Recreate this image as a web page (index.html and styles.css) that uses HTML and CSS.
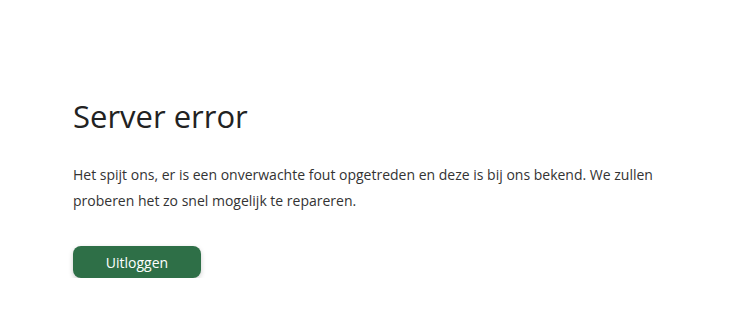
FILE: index.html
```html
<!DOCTYPE html>
<html lang="nl">
<head>
    <meta charset="UTF-8">
    <meta name="viewport" content="width=device-width, initial-scale=1.0">
    <title>Server error</title>
    <link rel="stylesheet" href="styles.css">
</head>
<body>
    <!-- ERROR PAGE -->
    <div class="error-page">
        <h1 class="error-title">Server error</h1>
        <p class="error-text">Het spijt ons, er is een onverwachte fout opgetreden en deze is bij ons bekend. We zullen proberen het zo snel mogelijk te repareren.</p>
        <button class="logout-button">Uitloggen</button>
    </div>
</body>
</html>
```

FILE: styles.css
```css
/* General Styles */
body {
    margin: 0;
    background: #ffffff;
    font-family: 'Open Sans', 'Noto Sans', sans-serif;
    color: #333333;
}

.error-page {
    padding: 96px 73px 0 73px;
    max-width: 600px;
}

/* Header */
.error-title {
    font-family: 'Open Sans', 'Noto Sans', sans-serif;
    font-weight: 400;
    font-size: 31px;
    line-height: 40px;
    color: #222222;
    margin: 0 0 26px 0;
}

/* Text */
.error-text {
    font-size: 14px;
    line-height: 26px;
    margin: 0 0 32px 0;
}

/* Button */
.logout-button {
    background: #2e6f47;
    color: #ffffff;
    border: none;
    border-radius: 8px;
    width: 128px;
    height: 32px;
    font-family: 'Open Sans', sans-serif;
    font-size: 14px;
    font-weight: 500;
    box-shadow: 0 2px 5px rgba(0, 0, 0, 0.2);
    cursor: pointer;
}
```
